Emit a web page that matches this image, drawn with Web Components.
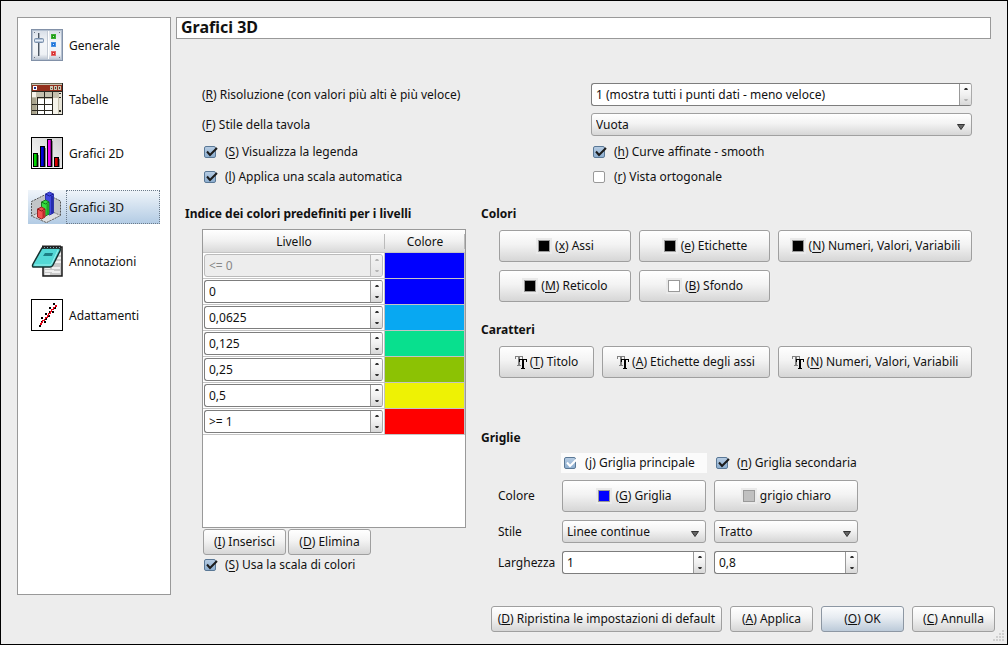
<!DOCTYPE html>
<html lang="it">
<head>
<meta charset="utf-8">
<title>Grafici 3D</title>
<style>
body { margin: 0; font: 12px/18px "Noto Sans", "Open Sans", sans-serif; color: #111; background: #ededed; }
</style>
</head>
<body>
<prefs-dialog>
  <side-nav slot="nav">
    <nav-item>
      <svg slot="icon" width="32" height="32" viewBox="0 0 32 32" aria-hidden="true">
        <defs><linearGradient id="g1" x2="0" y2="1"><stop offset="0" stop-color="#d5dce6"/><stop offset=".4" stop-color="#f4f6f9"/><stop offset=".8" stop-color="#eef1f5"/><stop offset="1" stop-color="#b4becc"/></linearGradient></defs>
        <rect x=".5" y=".5" width="31" height="31" fill="url(#g1)" stroke="#8291a8"/>
        <rect x="1.5" y="1.5" width="29" height="29" fill="none" stroke="#b4c0d0"/>
        <path d="M16.500 2v28" stroke="#c3cad4"/><path d="M17.500 2v28" stroke="#fff"/>
        <path d="M3 3h1v1H3zM28 3h1v1h-1zM3 28h1v1H3zM28 28h1v1h-1z" fill="#6c7584"/>
        <path d="M7.500 4v23" stroke="#4c5662"/><path d="M8.500 4v23" stroke="#a6aeb9"/>
        <rect x="3.500" y="9.500" width="9" height="4" rx="1" fill="#b4c4d8" stroke="#7a90ac"/><path d="M4 11.500h8" stroke="#e6eef8"/>
        <path d="M20 5h5v5h-5z" fill="#3aae34"/><path d="M21 6h3v3h-3z" fill="#1c9a16"/><path d="M22 7h1v1h-1z" fill="#c2f5b4"/>
        <path d="M20 13h5v5h-5z" fill="#4a94e4"/><path d="M21 14h3v3h-3z" fill="#1f72d8"/><path d="M22 15h1v1h-1z" fill="#d4ecff"/>
        <path d="M20 22h5v5h-5z" fill="#e46a6a"/><path d="M21 23h3v3h-3z" fill="#d83030"/><path d="M22 24h1v1h-1z" fill="#ffd4cf"/>
      </svg>Generale</nav-item>
    <nav-item>
      <svg slot="icon" width="32" height="32" viewBox="0 0 32 32" shape-rendering="crispEdges" aria-hidden="true">
        <path fill="#c5c1ae" d="M0 0h32v32H0z"/>
        <path fill="#93301c" d="M1 2h30v6H1z"/>
        <path fill="#fff" d="M2 3h4v4H2z"/><path fill="#1d2c86" d="M3 4h2v2H3z"/>
        <path fill="#c9c5b2" d="M19 3h3v4h-3zM23 3h3v4h-3zM27 3h3v4h-3z"/>
        <path fill="#443" d="M20 5h1v1h-1zM24 4h1v2h-1zM28 4h1v2h-1z"/>
        <path fill="#aaa58e" d="M1 15h4v16H1z"/><path fill="#f6f4ea" d="M1 9h4v5H1z"/>
        <path fill="#fff" d="M7 16h15v15H7z"/><path fill="#f6f4ea" d="M22 15h5v16h-5z"/>
        <path fill="#e6e3d6" d="M28 9h3v22h-3z"/>
        <path fill="#2a2820" d="M1 8h30v1H1zM6 14h16v1H6zM1 21h21v1H1zM1 27h21v1H1zM6 14h1v17H6zM13 9h1v22h-1zM21 9h1v22h-1zM28 10h2v1h-2zM28 14h2v1h-2zM28 27h2v2h-2z"/>
        <path fill="#222" d="M0 31h32v1H0zM31 0h1v32h-1z"/><path fill="#6a6553" d="M0 0h31v1H0zM0 0h1v31H0z"/>
      </svg>Tabelle</nav-item>
    <nav-item>
      <svg slot="icon" width="32" height="32" viewBox="0 0 32 32" shape-rendering="crispEdges" aria-hidden="true">
        <defs><linearGradient id="g3" x1="1" x2="0" y2="1"><stop offset="0" stop-color="#cfcfcf"/><stop offset="1" stop-color="#fff"/></linearGradient></defs>
        <rect x=".5" y=".5" width="31" height="31" fill="url(#g3)" stroke="#000"/>
        <path fill="#888" d="M7 18h1v12H7zM14 11h1v19h-1zM21 4h1v26h-1zM28 22h1v8h-1z"/>
        <path fill="#000" d="M2 16h5v14H2zM9 9h5v21H9zM16 2h5v28h-5zM23 20h5v10h-5z"/>
        <path fill="#00d400" d="M3 17h2v12H3z"/><path fill="#008a00" d="M5 17h1v12H5z"/>
        <path fill="#0000d8" d="M10 10h2v19h-2z"/><path fill="#000090" d="M12 10h1v19h-1z"/>
        <path fill="#f000f0" d="M17 3h2v26h-2z"/><path fill="#a000a0" d="M19 3h1v26h-1z"/>
        <path fill="#d80000" d="M24 21h2v8h-2z"/><path fill="#900000" d="M26 21h1v8h-1z"/>
      </svg>Grafici 2D</nav-item>
    <nav-item current>
      <svg slot="icon" width="32" height="32" viewBox="0 0 32 32" aria-hidden="true">
        <path d="M.5 10.500 15.500 3 29.500 10v14.500L15.500 31.500.5 25z" fill="#c2c5c7" stroke="#555" stroke-dasharray="2 1"/>
        <path d="M15.500 18 .5 25l15 6.500 14-7z" fill="#dcdee0" stroke="#777" stroke-dasharray="2 1"/>
        <path d="M14.500 3l4-2 4 2v19l-4 2-4-2z" fill="#4148e0" stroke="#3036a8"/>
        <path d="M20 5h2v17l-2 1z" fill="#262cae"/>
        <path d="M14.500 3l4 2 4-2" fill="none" stroke="#1c2090"/>
        <path d="M10.500 11l4-2 3.500 2v12l-3.500 2-4-2z" fill="#35e040" stroke="#1b7a24"/>
        <path d="M15.500 13h2v10l-2 1z" fill="#1da828"/>
        <path d="M10.500 11l4 2 3.500-2" fill="none" stroke="#12751b"/>
        <path d="M6.500 18l4-2 3.500 2v8l-3.500 2-4-2z" fill="#f25050" stroke="#962424"/>
        <path d="M11.500 20h2v6l-2 1z" fill="#b82a2a"/>
        <path d="M6.500 18l4 2 3.500-2" fill="none" stroke="#8e1818"/>
      </svg>Grafici 3D</nav-item>
    <nav-item>
      <svg slot="icon" width="32" height="32" viewBox="0 0 32 32" aria-hidden="true">
        <path d="M14 2h17v29H12V20z" fill="#c9c9c9" stroke="#1a1a1a" stroke-width="1.500"/>
        <path d="M27 9h3M26 13h4M24 17h6M14 23h5M21 23h8M14 26h9M14 29h5M21 27h8" stroke="#efefef" stroke-width="2"/>
        <path d="M11 3h17q2 0 1 3l-7 14q-1 2-3 2H2q-1-1 0-3z" fill="#54d9d6" stroke="#16302f" stroke-width="1.500"/>
        <path d="M3.500 20H19q1 0 2-2l6-13" fill="none" stroke="#9cf0ec"/>
        <path d="M14 8h8l-1 3h-9z" fill="#1c7f84"/>
        <path d="M11 2h19" stroke="#222" stroke-width="3"/>
        <path d="M13 2.500h17" stroke="#8ab" stroke-width="1" stroke-dasharray="1 2"/>
      </svg>Annotazioni</nav-item>
    <nav-item>
      <svg slot="icon" width="32" height="32" viewBox="0 0 32 32" shape-rendering="crispEdges" aria-hidden="true">
        <rect x=".5" y=".5" width="31" height="31" fill="#fff" stroke="#000"/>
        <path d="M8 26h2v2H8zM10 22h2v2h-2zM13 22h2v2h-2zM10 18h2v2h-2zM14 19h2v2h-2zM14 14h2v2h-2zM17 16h2v2h-2zM18 12h2v2h-2zM21 12h2v2h-2zM18 8h2v2h-2zM22 4h2v2h-2zM23 8h2v2h-2z" fill="#000"/>
        <path d="M8 26h1v-2h1v-1h1v-2h2v-1h1v-2h2v-2h1v-2h2v-2h1v-2h2V8h2V6h2v2h-2v1h-1v2h-2v2h-1v2h-2v2h-1v2h-2v1h-1v2h-2v2h-1v2H8z" fill="#e40012"/>
      </svg>Adattamenti</nav-item>
  </side-nav>
  <plot3d-page slot="page"></plot3d-page>
  <push-button slot="actions"><u>D</u>) Ripristina le impostazioni di default</push-button>
  <push-button slot="actions"><u>A</u>) Applica</push-button>
  <push-button slot="actions" default><u>O</u>) OK</push-button>
  <push-button slot="actions"><u>C</u>) Annulla</push-button>
</prefs-dialog>

<script>
function define(name, html, setup) {
  const template = document.createElement('template');
  template.innerHTML = '<style>*{box-sizing:border-box}:host{box-sizing:border-box}u{text-underline-offset:2px}</style>' + html;
  customElements.define(name, class extends HTMLElement {
    constructor() {
      super();
      this.attachShadow({ mode: 'open' }).append(template.content.cloneNode(true));
    }
    connectedCallback() { if (setup) setup(this, this.shadowRoot); }
  });
}

/* Every mnemonic button and check box text opens with "(" before its underlined key. */
define('push-button', `
<style>
:host { display: block; }
button { display: flex; width: 100%; height: 26px; padding: 0 6px; align-items: center; justify-content: center; gap: 3px;
  font: inherit; color: inherit; white-space: nowrap; border: 1px solid #9f9f9f; border-radius: 3px;
  background: linear-gradient(#fff, #f3f3f3 45%, #d6d6d6); box-shadow: 0 0 1px #fff; }
:host([large]) button { height: 32px; }
:host([default]) button { border-color: #8d97a3; background: linear-gradient(#fbfcfd, #e6ebf1 45%, #bccad9); }
</style>
<button type="button"><slot name="icon"></slot><span><span class="open">(</span><slot></slot></span></button>`,
(host, root) => { if (host.hasAttribute('plain')) root.querySelector('.open').remove(); });

define('check-box', `
<style>
:host { display: block; }
label { display: flex; align-items: center; gap: 7px; height: 18px; white-space: nowrap; }
.box { display: grid; flex: none; width: 14px; height: 14px; }
input, svg { grid-area: 1 / 1; margin: 0; }
input { appearance: none; width: 12px; height: 12px; align-self: center; border: 1px solid #999; border-radius: 2px; background: #fff; }
input:checked { border-color: #5a7896; background: linear-gradient(#b5cbe2, #8eafd0); }
svg { display: none; pointer-events: none; }
input:checked + svg { display: block; }
:host([hover]) { background: #fbfbfb; box-shadow: 0 0 0 1px #fbfbfb; }
path { stroke: #1c1c1c; }
:host([hover]) path { stroke: #fff; }
</style>
<label><span class="box"><input type="checkbox"><svg width="14" height="14" viewBox="0 0 14 14" aria-hidden="true"><path d="M3 6.500 6 10 13 3" fill="none" stroke-width="2"/></svg></span><span>(<slot></slot></span></label>`,
(host, root) => { root.querySelector('input').checked = host.hasAttribute('checked'); });

define('spin-box', `
<style>
:host { display: flex; height: 23px; border: 1px solid #7d7d7d; border-right-color: #aaa; border-radius: 3px; background: #fff; overflow: hidden; }
::slotted(input) { flex: 1; min-width: 0; width: 0; padding: 0 4px; margin: 0; border: 0; background: none; font: inherit; color: inherit; outline: 0; }
.steps { display: flex; flex-direction: column; width: 12px; border-left: 1px solid #999; background: linear-gradient(#fff, #f1f1f1 50%, #d8d8d8); }
button { flex: 1; padding: 0; border: 0; background: none; color: #333; display: grid; place-items: center; }
svg { display: block; }
:host([dim]) { border-color: #bbb; background: #ededed; color: #888; }
:host([dim]) ::slotted(input) { color: #888; }
:host([dim]) button, :host([first]) button + button { color: #b5b5b5; }
:host([dim]) .steps { border-color: #bbb; background: linear-gradient(#f4f4f4, #e4e4e4); }
</style>
<slot></slot>
<span class="steps">
<button type="button" tabindex="-1" aria-label="Aumenta"><svg width="4" height="2" viewBox="0 0 4 2"><path d="M0 2 1 0h2l1 2z" fill="currentColor"/></svg></button>
<button type="button" tabindex="-1" aria-label="Diminuisci"><svg width="4" height="2" viewBox="0 0 4 2"><path d="M0 0 1 2h2l1-2z" fill="currentColor"/></svg></button>
</span>`);

define('drop-down', `
<style>
:host { display: grid; height: 23px; align-items: center; border: 1px solid #a0a0a0; border-radius: 3px; background: linear-gradient(#fff, #f3f3f3 45%, #d6d6d6); }
::slotted(select) { grid-area: 1 / 1; appearance: none; width: 100%; height: 21px; margin: 0; padding: 0 24px 0 4px; border: 0; background: none; font: inherit; color: inherit; }
svg { grid-area: 1 / 1; justify-self: end; margin: 4px 6px 0 0; pointer-events: none; }
</style>
<slot></slot><svg width="8" height="6" viewBox="0 0 8 6" aria-hidden="true"><path d="M.5.5h7L4 5.500z" fill="#666" stroke="#333"/></svg>`);

define('color-chip', `
<style>
:host { display: grid; place-items: center; width: 16px; height: 16px; background: #eaeaea; }
i { width: 12px; height: 12px; border: 1px solid #999; background: var(--chip, #000); }
</style><i></i>`);

define('font-glyph', `
<style>:host { display: block; width: 12px; height: 13px; } svg { display: block; }</style>
<svg width="12" height="13" viewBox="0 0 12 13" shape-rendering="crispEdges" aria-hidden="true">
<path fill="#808080" d="M0 0h8v3H7V1H5v8h1v1H2V9h1V1H1v2H0z"/>
<path fill="#000" d="M4 3h8v3h-1V4H9v8h1v1H6v-1h1V4H5v2H4z"/></svg>`);

define('nav-item', `
<style>
:host { display: block; }
a { display: flex; align-items: center; height: 34px; padding-left: 3px; color: inherit; text-decoration: none; }
span { flex: 1; height: 34px; margin-left: 3px; padding-left: 2px; line-height: 34px; border: 1px dotted transparent; }
:host([current]) a { background: linear-gradient(#f0f5fa, #b2cbe4); }
:host([current]) span { border-color: #6b7a8a; }
::slotted(svg) { display: block; flex: none; }
</style>
<a href="#"><slot name="icon"></slot><span><slot></slot></span></a>`);

define('side-nav', `
<style>
:host { display: block; background: #fff; border: 1px solid #999; padding: 10px; }
nav { display: grid; gap: 20px; }
</style>
<nav><slot></slot></nav>`);

define('form-section', `
<style>
:host { display: block; }
h2 { margin: 0; font: inherit; font-weight: bold; }
</style>
<h2><slot name="title"></slot></h2><slot></slot>`);

define('level-table', `
<style>
:host { display: block; border: 1px solid #999; background: #fff; height: 299px; }
table { width: 100%; border-collapse: separate; border-spacing: 0; table-layout: fixed; }
th { position: relative; height: 23px; padding: 2px 0 0; font-weight: normal; background: linear-gradient(#fff, #f1f1f1 50%, #d9d9d9); border-bottom: 1px solid #c4c4c4; }
th::after { content: ""; position: absolute; right: 0; top: 4px; bottom: 3px; width: 1px; background: #bbb; }
th:last-child { width: 80px; }
td { height: 26px; padding: 1px; border-right: 1px solid #c4c4c4; border-bottom: 1px solid #c4c4c4; background: #fff; }
td:last-child { padding: 0; background: var(--level); }
</style>
<table><thead><tr><th scope="col">Livello</th><th scope="col">Colore</th></tr></thead><tbody></tbody></table>`,
(host, root) => {
  const levels = [['<= 0', '#0000ff'], ['0', '#0000ff'], ['0,0625', '#08a8f2'], ['0,125', '#08e08e'], ['0,25', '#8cc204'], ['0,5', '#eef204'], ['>= 1', '#ff0000']];
  levels.forEach(([value, color], i) => {
    const row = root.querySelector('tbody').insertRow();
    const spin = document.createElement('spin-box');
    const input = document.createElement('input');
    input.value = value;
    input.setAttribute('aria-label', 'Livello ' + (i + 1));
    if (i === 0) { spin.setAttribute('dim', ''); input.disabled = true; }
    spin.append(input);
    row.insertCell().append(spin);
    row.insertCell().style.setProperty('--level', color);
  });
});

define('plot3d-page', `
<style>
:host { display: block; }
h1 { margin: 0; height: 22px; padding: 0 4px; border: 1px solid #999; background: #fff; font-size: 16px; line-height: 18px; }
.body { padding: 44px 19px 0 9px; }
.top { display: grid; grid-template-columns: 1fr 1fr; gap: 7px 8px; align-items: center; padding-left: 17px; }
check-box { padding-left: 2px; }
.columns { display: grid; grid-template-columns: 281fr 491fr; gap: 15px; margin-top: 19px; }
level-table { margin-top: 6px; }
.indent { padding-left: 17px; }
.edit { display: flex; gap: 2px; padding: 1px 0 0 1px; }
.edit push-button { width: 83px; }
.edit + check-box { margin-top: 1px; }
.right > * { display: block; }
.buttons { display: grid; grid-template-columns: 132fr 131fr 194fr; gap: 8px; margin: 7px 0 0 18px; }
.fonts { grid-template-columns: 95fr 168fr 194fr; }
.fontset { margin-top: 19px; }
.grids { margin-top: 51px; }
.grid { display: grid; grid-template-columns: 56px 144px 144px; gap: 8px; align-items: center; margin: 7px 0 0 17px; }
.grid check-box[hover] { grid-column: 2; }
</style>
<h1>Grafici 3D</h1>
<div class="body">
  <div class="top">
    <label for="res">(<u>R</u>) Risoluzione (con valori più alti è più veloce)</label>
    <spin-box first><input id="res" value="1 (mostra tutti i punti dati - meno veloce)"></spin-box>
    <label for="style">(<u>F</u>) Stile della tavola</label>
    <drop-down><select id="style"><option>Vuota</option></select></drop-down>
    <check-box checked><u>S</u>) Visualizza la legenda</check-box>
    <check-box checked><u>h</u>) Curve affinate - smooth</check-box>
    <check-box checked><u>l</u>) Applica una scala automatica</check-box>
    <check-box><u>r</u>) Vista ortogonale</check-box>
  </div>
  <div class="columns">
    <form-section><span slot="title">Indice dei colori predefiniti per i livelli</span>
      <div class="indent">
        <level-table></level-table>
        <div class="edit"><push-button><u>I</u>) Inserisci</push-button><push-button><u>D</u>) Elimina</push-button></div>
        <check-box checked><u>S</u>) Usa la scala di colori</check-box>
      </div>
    </form-section>
    <div class="right">
      <form-section><span slot="title">Colori</span>
        <div class="buttons">
          <push-button large><color-chip slot="icon"></color-chip><u>x</u>) Assi</push-button>
          <push-button large><color-chip slot="icon"></color-chip><u>e</u>) Etichette</push-button>
          <push-button large><color-chip slot="icon"></color-chip><u>N</u>) Numeri, Valori, Variabili</push-button>
          <push-button large><color-chip slot="icon"></color-chip><u>M</u>) Reticolo</push-button>
          <push-button large><color-chip slot="icon" style="--chip:#fff"></color-chip><u>B</u>) Sfondo</push-button>
        </div>
      </form-section>
      <form-section class="fontset"><span slot="title">Caratteri</span>
        <div class="buttons fonts">
          <push-button large><font-glyph slot="icon"></font-glyph><u>T</u>) Titolo</push-button>
          <push-button large><font-glyph slot="icon"></font-glyph><u>A</u>) Etichette degli assi</push-button>
          <push-button large><font-glyph slot="icon"></font-glyph><u>N</u>) Numeri, Valori, Variabili</push-button>
        </div>
      </form-section>
      <form-section class="grids"><span slot="title">Griglie</span>
        <div class="grid">
          <check-box checked hover><u>j</u>) Griglia principale</check-box>
          <check-box checked><u>n</u>) Griglia secondaria</check-box>
          <span>Colore</span>
          <push-button large><color-chip slot="icon" style="--chip:#00f"></color-chip><u>G</u>) Griglia</push-button>
          <push-button large plain><color-chip slot="icon" style="--chip:#c0c0c0"></color-chip>grigio chiaro</push-button>
          <label for="line1">Stile</label>
          <drop-down><select id="line1"><option>Linee continue</option></select></drop-down>
          <drop-down><select aria-label="Stile secondario"><option>Tratto</option></select></drop-down>
          <label for="w1">Larghezza</label>
          <spin-box><input id="w1" value="1"></spin-box>
          <spin-box><input aria-label="Larghezza secondaria" value="0,8"></spin-box>
        </div>
      </form-section>
    </div>
  </div>
</div>`);

define('prefs-dialog', `
<style>
:host { position: relative; display: flex; flex-direction: column; min-height: 100vh; padding: 16px 12px 12px 16px; border: 1px solid #000; background: #ededed; }
.main { flex: 1; display: grid; grid-template-columns: 154px 1fr; gap: 5px; padding-right: 4px; }
footer { display: flex; justify-content: flex-end; gap: 8px; margin-top: 11px; }
::slotted(push-button) { min-width: 83px; }
.grip { position: absolute; right: 2px; bottom: 2px; }
</style>
<div class="main"><slot name="nav"></slot><slot name="page"></slot></div>
<footer><slot name="actions"></slot></footer>
<svg class="grip" width="12" height="12" viewBox="0 0 12 12" aria-hidden="true"><path d="M9 0h2v2H9zM6 3h2v2H6zM9 3h2v2H9zM3 6h2v2H3zM6 6h2v2H6zM9 6h2v2H9zM0 9h2v2H0zM3 9h2v2H3zM6 9h2v2H6zM9 9h2v2H9z" fill="#cfcfcf"/></svg>`);
</script>
</body>
</html>
